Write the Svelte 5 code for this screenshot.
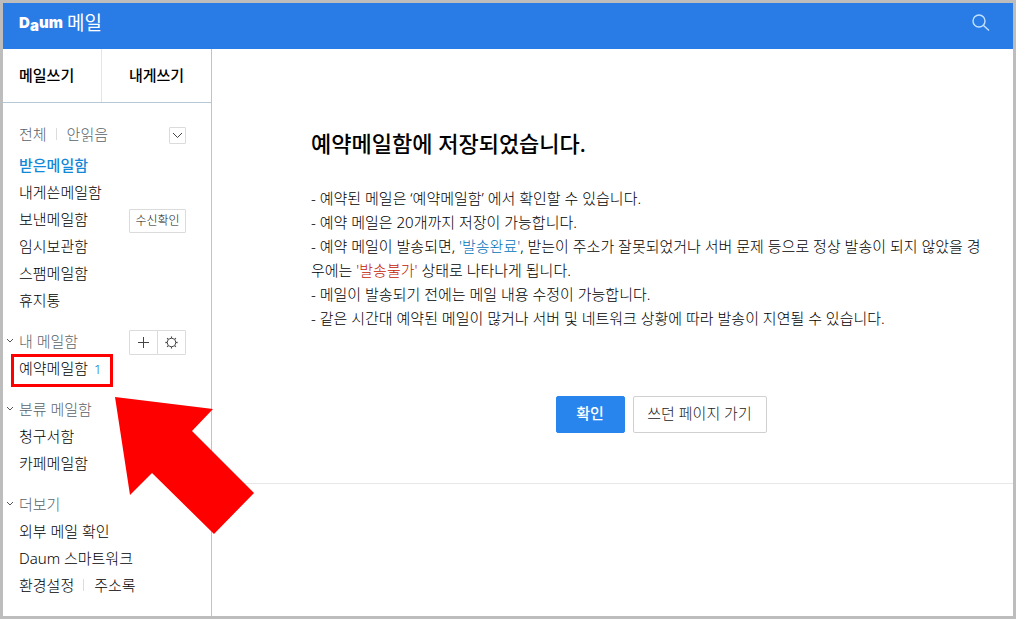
<script>
    const basicBoxes = ['내게쓴메일함', '보낸메일함', '임시보관함', '스팸메일함', '휴지통'];
    const sortedBoxes = ['청구서함', '카페메일함'];
    const moreLinks = ['외부 메일 확인', 'Daum 스마트워크'];
</script>

<svelte:head>
    <title>Daum 메일</title>
</svelte:head>

{#snippet fold()}
    <svg class="fold" viewBox="0 0 8 6" aria-hidden="true"><path d="M1 1l3 3 3-3" /></svg>
{/snippet}

<div class="page">
    <header>
        <a class="logo" href="#home">
            <svg class="daum" viewBox="0 0 43 20" role="img" aria-label="Daum">
                <text x="0" y="16">D</text>
                <text x="11" y="19">a</text>
                <text x="20" y="16">um</text>
            </svg>
            <span>메일</span>
        </a>
        <button class="search" aria-label="검색">
            <svg viewBox="0 0 18 18"><circle cx="7" cy="7" r="6" /><path d="M11.5 11.5l5.5 5" /></svg>
        </button>
    </header>

    <div class="body">
        <aside>
            <div class="write">
                <a href="#write">메일쓰기</a>
                <a href="#me">내게쓰기</a>
            </div>
            <nav>
                <div class="row filter">
                    <a href="#all">전체</a>
                    <i class="bar"></i>
                    <a href="#unread">안읽음</a>
                    <button class="small arrow" aria-label="펼치기">
                        <svg viewBox="0 0 11 7"><path d="M1 1l4.5 4.5L10 1" /></svg>
                    </button>
                </div>

                <ul>
                    <li class="row"><a class="on" href="#inbox">받은메일함</a></li>
                    {#each basicBoxes as box}
                        <li class="row">
                            <a href="#box">{box}</a>
                            {#if box === '보낸메일함'}
                                <button class="small receipt">수신확인</button>
                            {/if}
                        </li>
                    {/each}
                </ul>

                <h2 class="row">
                    {@render fold()}내 메일함
                    <span class="tools">
                        <button class="small" aria-label="메일함 추가">
                            <svg viewBox="0 0 13 13"><path d="M6.5 1v11M1 6.5h11" /></svg>
                        </button>
                        <button class="small" aria-label="메일함 설정">
                            <svg viewBox="0 0 13 13">
                                <circle cx="6.5" cy="6.5" r="4.2" />
                                <circle class="teeth" cx="6.5" cy="6.5" r="5.3" pathLength="80" />
                            </svg>
                        </button>
                    </span>
                </h2>
                <ul>
                    <li class="row marked"><a href="#reserved">예약메일함 <em>1</em></a></li>
                </ul>

                <h2 class="row">{@render fold()}분류 메일함</h2>
                <ul>
                    {#each sortedBoxes as box}
                        <li class="row"><a href="#box">{box}</a></li>
                    {/each}
                </ul>

                <h2 class="row">{@render fold()}더보기</h2>
                <ul>
                    {#each moreLinks as link}
                        <li class="row"><a href="#more">{link}</a></li>
                    {/each}
                    <li class="row">
                        <a href="#settings">환경설정</a>
                        <i class="bar"></i>
                        <a href="#contacts">주소록</a>
                    </li>
                </ul>
            </nav>
            <svg class="pointer" viewBox="0 0 139 137" aria-hidden="true">
                <path d="M0 0L98 12 77 34 139 96 99 137 37 76 15 98z" />
            </svg>
        </aside>

        <main>
            <section>
                <h1>예약메일함에 저장되었습니다.</h1>
                <p>- 예약된 메일은 ‘예약메일함’ 에서 확인할 수 있습니다.</p>
                <p>- 예약 메일은 20개까지 저장이 가능합니다.</p>
                <p>- 예약 메일이 발송되면, <span class="done">'발송완료'</span>, 받는이 주소가 잘못되었거나 서버 문제 등으로 정상 발송이 되지 않았을 경<br>우에는 <span class="fail">'발송불가'</span> 상태로 나타나게 됩니다.</p>
                <p>- 메일이 발송되기 전에는 메일 내용 수정이 가능합니다.</p>
                <p>- 같은 시간대 예약된 메일이 많거나 서버 및 네트워크 상황에 따라 발송이 지연될 수 있습니다.</p>
                <div class="buttons">
                    <button class="ok">확인</button>
                    <button class="back">쓰던 페이지 가기</button>
                </div>
            </section>
        </main>
    </div>
</div>

<style>
    :global(body) {
        background: #fff;
    }
    .page {
        box-sizing: border-box;
        display: flex;
        flex-direction: column;
        min-height: 100vh;
        border: 3px solid #bdbdbd;
        color: #000;
        font-family: "Noto Sans", "Noto Sans CJK KR", sans-serif;
        font-size: 15px;
        font-weight: 300;
    }
    a {
        color: inherit;
        text-decoration: none;
    }
    button {
        padding: 0;
        font: inherit;
        cursor: pointer;
    }
    svg {
        display: block;
        fill: none;
        stroke: #444;
    }
    ul {
        margin: 0;
        padding: 0;
        list-style: none;
    }

    header {
        display: flex;
        justify-content: space-between;
        height: 46px;
        padding: 0 23px 0 16px;
        background: #297be6;
        color: #fff;
    }
    .logo {
        display: flex;
        align-items: center;
        gap: 5px;
        height: 38px;
        font-size: 19px;
        font-weight: 400;
    }
    .daum {
        width: 43px;
        height: 20px;
        overflow: visible;
        font: 900 15px Inter, sans-serif;
        fill: #fff;
        stroke: none;
    }
    .search {
        height: 40px;
        border: 0;
        background: none;
    }
    .search svg {
        width: 18px;
        height: 18px;
        stroke: #c3e2ff;
        stroke-width: 1.4;
    }

    .body {
        display: flex;
        flex: 1;
    }
    aside {
        position: relative;
        flex: none;
        width: 208px;
        border-right: 1px solid #bfc3c9;
    }
    .write {
        display: flex;
        border-bottom: 1px solid #b5c8d6;
        font-weight: 500;
        line-height: 53px;
    }
    .write a {
        flex: 1;
        text-align: center;
    }
    .write a:first-child {
        flex: none;
        width: 82px;
        padding-left: 16px;
        border-right: 1px solid #e3e5e8;
        text-align: left;
    }
    nav {
        padding: 17px 25px 13px 16px;
    }
    .row {
        position: relative;
        display: flex;
        align-items: center;
        height: 27px;
        white-space: nowrap;
    }
    .filter {
        margin-bottom: 4px;
        color: #59636a;
    }
    h2 {
        margin: 14px 0 0;
        color: #59636a;
        font-size: 15px;
        font-weight: 300;
    }
    .bar {
        width: 1px;
        height: 12px;
        margin: 0 10px 0 9px;
        background: #dcdcdc;
    }
    .on {
        color: #1188d8;
        font-weight: 500;
    }
    em {
        margin-left: 2px;
        color: #0a74bd;
        font-size: 13px;
        font-style: normal;
    }
    .fold {
        position: absolute;
        left: -13px;
        width: 8px;
        height: 6px;
        stroke: #555;
    }
    .small {
        display: flex;
        align-items: center;
        justify-content: center;
        margin-top: 4px;
        border: 1px solid #d9dbdd;
        border-radius: 1px;
        background: #fff;
        color: #111;
    }
    .arrow {
        width: 17px;
        height: 17px;
        margin-left: auto;
    }
    .arrow svg {
        width: 11px;
        height: 7px;
    }
    .receipt {
        width: 57px;
        height: 24px;
        margin-left: auto;
        padding-bottom: 2px;
        font-size: 12px;
    }
    .tools {
        display: flex;
        margin-left: auto;
    }
    .tools button {
        width: 29px;
        height: 25px;
    }
    .tools button + button {
        margin-left: -1px;
    }
    .tools svg {
        width: 13px;
        height: 13px;
    }
    .teeth {
        stroke-width: 1.6;
        stroke-dasharray: 3 7;
        stroke-dashoffset: 1.5;
    }
    .marked::after {
        content: "";
        position: absolute;
        top: 0;
        left: -8px;
        width: 96px;
        height: 27px;
        border: 3px solid #f00;
        pointer-events: none;
    }
    .pointer {
        position: absolute;
        top: 348px;
        left: 112px;
        width: 139px;
        height: 137px;
        fill: #f00;
        stroke: none;
        pointer-events: none;
    }

    main {
        flex: 1;
        min-width: 0;
    }
    section {
        padding: 77px 2px 50px 99px;
        border-bottom: 1px solid #e7e7e7;
    }
    h1 {
        margin: 0 0 26px;
        font-size: 22px;
        font-weight: 500;
        line-height: 34px;
    }
    p {
        margin: 0;
        line-height: 24px;
    }
    .done {
        color: #0073ba;
    }
    .fail {
        color: #c42000;
    }
    .buttons {
        display: flex;
        justify-content: center;
        gap: 8px;
        margin: 66px 0 0;
    }
    .buttons button {
        height: 37px;
        padding-bottom: 4px;
        border: 1px solid #2985ee;
        border-radius: 2px;
    }
    .buttons .ok {
        width: 69px;
        background: #2985ee;
        color: #fff;
        font-weight: 500;
    }
    .buttons .back {
        width: 134px;
        border-color: #d0d0d0;
        background: #fff;
        color: #222;
    }
</style>
